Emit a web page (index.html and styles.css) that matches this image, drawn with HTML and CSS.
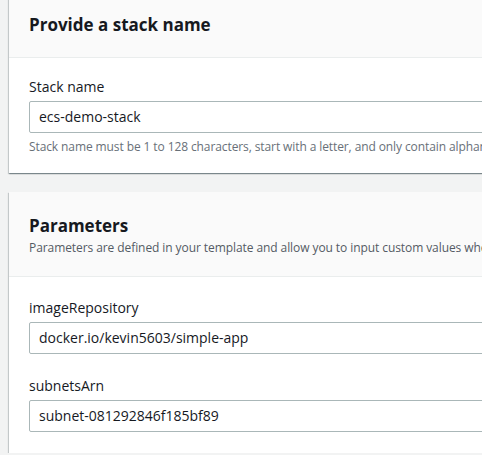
FILE: index.html
```html
<!DOCTYPE html>
<html>
<head>
<meta charset="utf-8">
<link rel="stylesheet" href="styles.css">
</head>
<body>
<div class="page">
  <section class="card card-first">
    <header class="card-header">
      <h2 class="card-title">Provide a stack name</h2>
    </header>
    <div class="card-body">
      <div class="field">
        <label class="field-label">Stack name</label>
        <div class="input">ecs-demo-stack</div>
        <p class="field-hint">Stack name must be 1 to 128 characters, start with a letter, and only contain alphanumeric characters.</p>
      </div>
    </div>
  </section>
  <section class="card">
    <header class="card-header card-header-desc">
      <h2 class="card-title">Parameters</h2>
      <p class="card-desc">Parameters are defined in your template and allow you to input custom values when you create or update a stack.</p>
    </header>
    <div class="card-body card-body-params">
      <div class="field">
        <label class="field-label">imageRepository</label>
        <div class="input">docker.io/kevin5603/simple-app</div>
      </div>
      <div class="field">
        <label class="field-label">subnetsArn</label>
        <div class="input">subnet-081292846f185bf89</div>
      </div>
    </div>
  </section>
</div>
</body>
</html>
```

FILE: styles.css
```css
html, body {
  margin: 0;
  padding: 0;
  overflow: hidden;
  background: #f2f3f3;
  font-family: "Open Sans", "Liberation Sans", Arial, sans-serif;
  color: #16191f;
}
.page {
  padding-left: 9px;
  width: 560px;
  display: flex;
  flex-direction: column;
  gap: 19px;
}
.card {
  background: #fff;
  box-shadow: 0 1px 1px 0 rgba(0,28,36,.3), 1px 1px 1px 0 rgba(0,28,36,.15), -1px 1px 1px 0 rgba(0,28,36,.15);
}
.card-first {
  margin-top: -7px;
}
.card-header {
  background: #fafafa;
  border-bottom: 1px solid #eaeded;
  padding: 20px;
}
.card-header-desc {
  padding-top: 22px;
}
.card-title {
  margin: 0;
  font-size: 17px;
  line-height: 24px;
  font-weight: 700;
}
.card-desc {
  margin: 2px 0 0;
  font-size: 12px;
  line-height: 16px;
  color: #545b64;
  letter-spacing: -0.08px;
  white-space: nowrap;
}
.card-body {
  padding: 19px 20px 18px;
  display: flex;
  flex-direction: column;
  gap: 22px;
}
.card-body-params {
  padding-top: 21px;
  padding-bottom: 21px;
}
.field {
  display: flex;
  flex-direction: column;
}
.field-label {
  font-size: 14px;
  line-height: 20px;
  margin-bottom: 4px;
}
.input {
  height: 30px;
  border: 1px solid #aab7b8;
  border-radius: 2px;
  padding: 0 9px;
  font-size: 14px;
  line-height: 30px;
  white-space: nowrap;
}
.field-hint {
  margin: 6px 0 0;
  font-size: 12px;
  line-height: 16px;
  color: #687078;
  letter-spacing: -0.1px;
  white-space: nowrap;
}
```
